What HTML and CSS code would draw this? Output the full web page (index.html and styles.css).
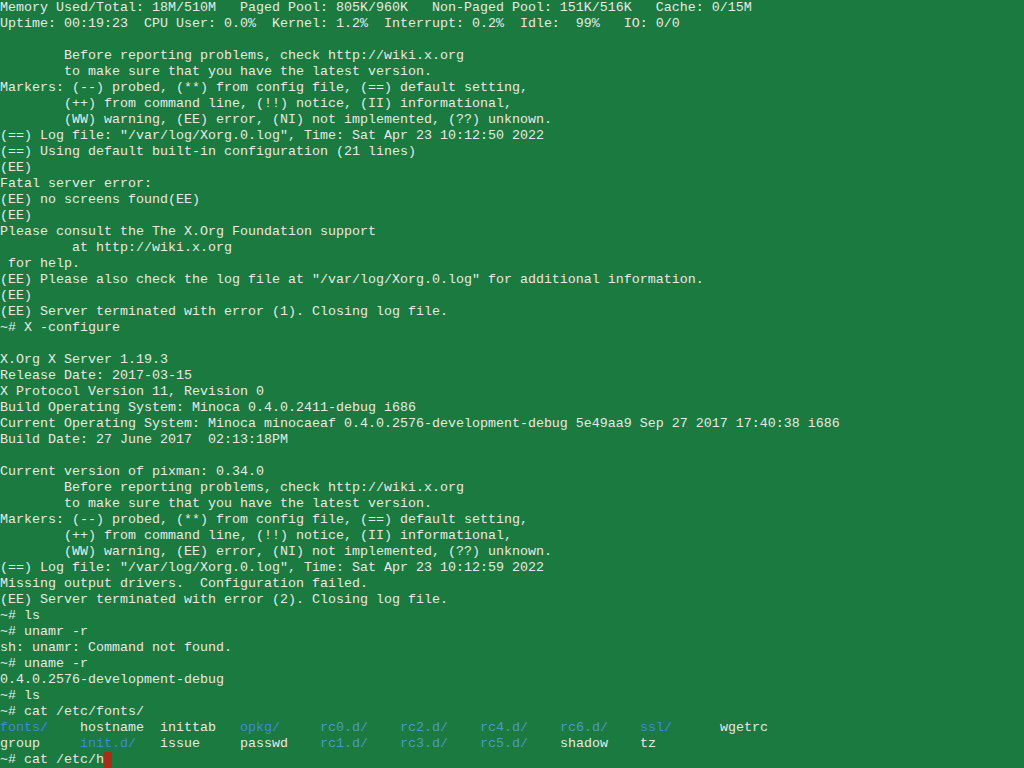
FILE: index.html
```html
<!DOCTYPE html>
<html>
<head>
<meta charset="utf-8">
<link rel="stylesheet" href="styles.css">
</head>
<body>
<pre class="term">Memory Used/Total: 18M/510M   Paged Pool: 805K/960K   Non-Paged Pool: 151K/516K   Cache: 0/15M
Uptime: 00:19:23  CPU User: 0.0%  Kernel: 1.2%  Interrupt: 0.2%  Idle:  99%   IO: 0/0

        Before reporting problems, check http://wiki.x.org
        to make sure that you have the latest version.
Markers: (--) probed, (**) from config file, (==) default setting,
        (++) from command line, (!!) notice, (II) informational,
        (WW) warning, (EE) error, (NI) not implemented, (??) unknown.
(==) Log file: "/var/log/Xorg.0.log", Time: Sat Apr 23 10:12:50 2022
(==) Using default built-in configuration (21 lines)
(EE)
Fatal server error:
(EE) no screens found(EE)
(EE)
Please consult the The X.Org Foundation support
         at http://wiki.x.org
 for help.
(EE) Please also check the log file at "/var/log/Xorg.0.log" for additional information.
(EE)
(EE) Server terminated with error (1). Closing log file.
~# X -configure

X.Org X Server 1.19.3
Release Date: 2017-03-15
X Protocol Version 11, Revision 0
Build Operating System: Minoca 0.4.0.2411-debug i686
Current Operating System: Minoca minocaeaf 0.4.0.2576-development-debug 5e49aa9 Sep 27 2017 17:40:38 i686
Build Date: 27 June 2017  02:13:18PM

Current version of pixman: 0.34.0
        Before reporting problems, check http://wiki.x.org
        to make sure that you have the latest version.
Markers: (--) probed, (**) from config file, (==) default setting,
        (++) from command line, (!!) notice, (II) informational,
        (WW) warning, (EE) error, (NI) not implemented, (??) unknown.
(==) Log file: "/var/log/Xorg.0.log", Time: Sat Apr 23 10:12:59 2022
Missing output drivers.  Configuration failed.
(EE) Server terminated with error (2). Closing log file.
~# ls
~# unamr -r
sh: unamr: Command not found.
~# uname -r
0.4.0.2576-development-debug
~# ls
~# cat /etc/fonts/
<span class="dir">fonts/</span>    hostname  inittab   <span class="dir">opkg/</span>     <span class="rc">rc0.d/</span>    <span class="rc">rc2.d/</span>    <span class="rc">rc4.d/</span>    <span class="rc">rc6.d/</span>    <span class="dir">ssl/</span>      wgetrc
group     <span class="dir">init.d/</span>   issue     passwd    <span class="rc">rc1.d/</span>    <span class="rc">rc3.d/</span>    <span class="rc">rc5.d/</span>    shadow    tz
~# cat /etc/h<span class="cursor"> </span></pre>
</body>
</html>
```
FILE: styles.css
```css
html, body {
  margin: 0;
  padding: 0;
  background: #1a7a40;
  width: 1024px;
  height: 768px;
  overflow: hidden;
}
.term {
  margin: 0;
  color: #e4ebe4;
  font-family: "Liberation Mono", "DejaVu Sans Mono", monospace;
  font-size: 13.3333px;
  line-height: 16px;
  white-space: pre;
}
.dir {
  color: #3d8cd0;
}
.rc {
  color: #4a9cc0;
}
.cursor {
  display: inline-block;
  width: 8px;
  height: 16px;
  vertical-align: top;
  background: #a3301a;
}
```
